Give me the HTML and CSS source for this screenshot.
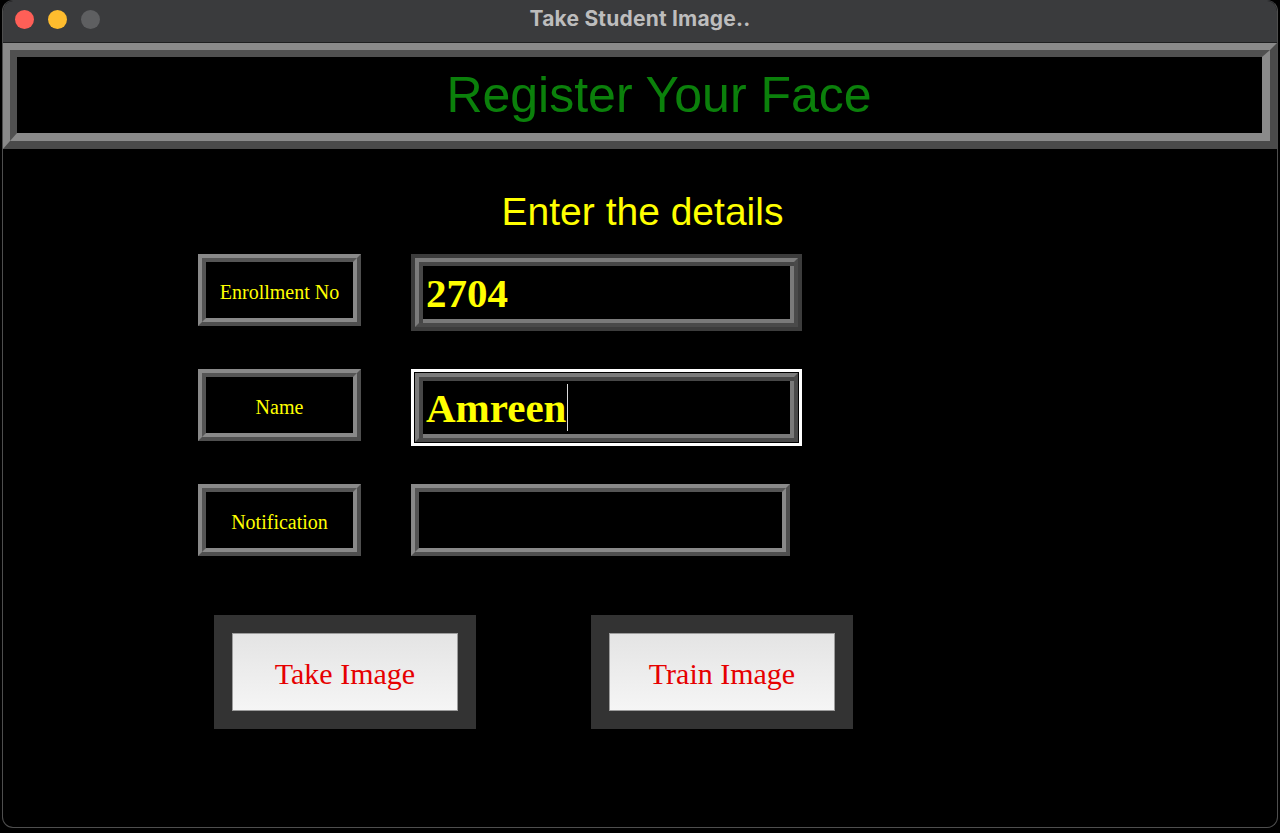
FILE: index.html
```html
<!DOCTYPE html>
<html lang="en">
<head>
<meta charset="utf-8">
<title>Take Student Image..</title>
<link rel="stylesheet" href="styles.css">
</head>
<body>
<div class="window">
  <div class="titlebar">
    <div class="lights">
      <span class="light red"></span>
      <span class="light yellow"></span>
      <span class="light gray"></span>
    </div>
    <div class="title">Take Student Image..</div>
    <div></div>
  </div>
  <div class="header">
    <div class="header-inner">
      <h1 class="heading">Register Your Face</h1>
    </div>
  </div>
  <main class="content">
    <h2 class="subtitle">Enter the details</h2>
    <div class="form">
      <div class="row">
        <div class="label-box"><div class="label-inner">Enrollment No</div></div>
        <div class="entry"><div class="entry-field"><span>2704</span></div></div>
      </div>
      <div class="row">
        <div class="label-box"><div class="label-inner">Name</div></div>
        <div class="entry focused"><div class="entry-field"><span>Amreen</span><span class="caret"></span></div></div>
      </div>
      <div class="row">
        <div class="label-box"><div class="label-inner">Notification</div></div>
        <div class="notif"><div class="label-inner"></div></div>
      </div>
    </div>
    <div class="actions">
      <div class="btn-frame"><button class="btn">Take Image</button></div>
      <div class="btn-frame"><button class="btn">Train Image</button></div>
    </div>
  </main>
</div>
</body>
</html>
```
FILE: styles.css
```css
* { box-sizing: border-box; }

body {
  margin: 0;
  background: #000;
  font-family: "Liberation Sans", Arial, sans-serif;
}

.window {
  margin: 0 2px;
  height: 828px;
  border: 1px solid #4e4e4e;
  border-top-color: #3a3b3d;
  border-radius: 11px;
  overflow: hidden;
  background: #000;
  display: flex;
  flex-direction: column;
}

.titlebar {
  height: 42px;
  flex: none;
  background: #3a3b3d;
  border-bottom: 1px solid #1e1f20;
  padding-bottom: 5px;
  display: grid;
  grid-template-columns: 1fr auto 1fr;
  align-items: center;
}

.lights {
  display: flex;
  gap: 14px;
  padding-left: 12px;
}

.light {
  width: 19px;
  height: 19px;
  border-radius: 50%;
}
.light.red { background: #fe5f57; }
.light.yellow { background: #febc2e; }
.light.gray { background: #5e5f61; }

.title {
  font-family: Inter, "Liberation Sans", sans-serif;
  font-weight: 700;
  font-size: 21px;
  letter-spacing: 0.2px;
  color: #bdbdbd;
  margin-top: -1px;
}

.header {
  height: 106px;
  flex: none;
  border-style: solid;
  border-width: 7px 7px 8px 7px;
  border-color: #8a8a8a #4a4a4a #4a4a4a #8a8a8a;
}

.header-inner {
  height: 100%;
  border-style: solid;
  border-width: 7px 8px 8px 7px;
  border-color: #505050 #8a8a8a #8a8a8a #505050;
  display: flex;
  align-items: center;
  justify-content: center;
  padding-left: 39px;
}

.heading {
  margin: 0;
  font-family: "Liberation Sans", Arial, sans-serif;
  font-weight: 400;
  font-size: 50px;
  color: #0b800b;
}

.subtitle {
  margin: 39px 0 0;
  padding-left: 5px;
  height: 48px;
  line-height: 48px;
  text-align: center;
  font-weight: 400;
  font-size: 39px;
  color: #ffff00;
}

.form {
  display: flex;
  flex-direction: column;
  gap: 38px;
  margin-top: 18px;
  padding-left: 195px;
}

.row {
  display: flex;
  gap: 50px;
  height: 77px;
  align-items: flex-start;
}

.label-box,
.notif {
  height: 72px;
  border: 4px solid;
  border-color: #898989 #4f4f4f #4f4f4f #898989;
}
.label-box { width: 163px; }
.notif { width: 379px; }

.label-inner {
  height: 100%;
  border: 4px solid;
  border-color: #555 #898989 #898989 #555;
  display: flex;
  align-items: center;
  justify-content: center;
  padding-top: 4px;
  font-family: "Liberation Serif", "Times New Roman", serif;
  font-size: 20px;
  color: #ffff00;
}

.entry {
  width: 391px;
  height: 77px;
  border: 4px solid #3c3c3c;
}
.entry.focused {
  border: 3px solid #ffffff;
  padding: 1px;
  background: #000;
}

.entry-field {
  height: 100%;
  border: 4px solid;
  border-color: #7c7c7c #4a4a4a #4a4a4a #7c7c7c;
  box-shadow: inset 4px 4px 0 #474747, inset -4px -4px 0 #7a7a7a;
  display: flex;
  align-items: center;
  padding-left: 7px;
  font-family: "Liberation Serif", "Times New Roman", serif;
  font-weight: 700;
  font-size: 41px;
  color: #ffff00;
}

.caret {
  width: 1px;
  height: 47px;
  margin-left: 1px;
  background: #dcdcdc;
}

.actions {
  display: flex;
  gap: 115px;
  margin-top: 54px;
  padding-left: 211px;
}

.btn-frame {
  background: #333333;
  padding: 18px;
}

.btn {
  display: flex;
  align-items: center;
  justify-content: center;
  width: 226px;
  height: 78px;
  margin: 0;
  padding: 4px 0 0;
  border: 1px solid #9c9c9c;
  background: linear-gradient(#e4e4e4, #f5f5f5);
  font-family: "Liberation Serif", "Times New Roman", serif;
  font-size: 30px;
  color: #e60000;
}
```
